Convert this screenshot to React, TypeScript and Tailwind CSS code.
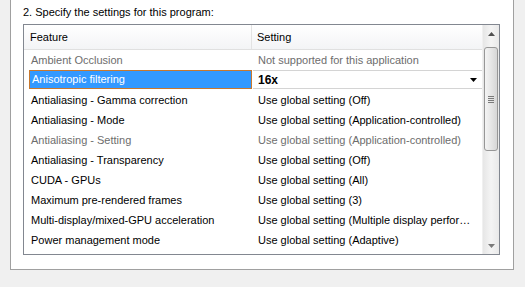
import React from "react"

type Row = { feature: string; setting: string; disabled?: boolean; selected?: boolean }

const rows: Row[] = [
  { feature: "Ambient Occlusion", setting: "Not supported for this application", disabled: true },
  { feature: "Anisotropic filtering", setting: "16x", selected: true },
  { feature: "Antialiasing - Gamma correction", setting: "Use global setting (Off)" },
  { feature: "Antialiasing - Mode", setting: "Use global setting (Application-controlled)" },
  { feature: "Antialiasing - Setting", setting: "Use global setting (Application-controlled)", disabled: true },
  { feature: "Antialiasing - Transparency", setting: "Use global setting (Off)" },
  { feature: "CUDA - GPUs", setting: "Use global setting (All)" },
  { feature: "Maximum pre-rendered frames", setting: "Use global setting (3)" },
  { feature: "Multi-display/mixed-GPU acceleration", setting: "Use global setting (Multiple display perfor…" },
  { feature: "Power management mode", setting: "Use global setting (Adaptive)" },
]

const Arrow = ({ down, color }: { down?: boolean; color: string }) => (
  <svg width="7" height="4" viewBox="0 0 7 4">
    {down ? <path d="M0 0h7L3.5 4z" fill={color} /> : <path d="M0 4h7L3.5 0z" fill={color} />}
  </svg>
)

function Scrollbar() {
  return (
    <div className="w-[17px] flex flex-col bg-gradient-to-r from-[#e6e6e6] via-[#f4f4f4] to-[#e9e9e9] border-l border-[#f0f0f0]">
      <div className="h-[17px] flex items-center justify-center">
        <Arrow color="#505050" />
      </div>
      <div className="mt-[5px] mx-[1px] h-[104px] rounded-[3px] border border-[#979797] bg-gradient-to-r from-[#f4f4f4] via-[#e6e6e6] to-[#d6d6d6] flex flex-col items-center justify-center gap-[1px]">
        <div className="w-[6px] h-[1px] bg-[#7a7a7a]" />
        <div className="w-[6px] h-[1px] bg-[#7a7a7a]" />
        <div className="w-[6px] h-[1px] bg-[#7a7a7a]" />
        <div className="w-[6px] h-[1px] bg-[#7a7a7a]" />
      </div>
      <div className="flex-1" />
      <div className="h-[17px] flex items-center justify-center">
        <Arrow down color="#7a7a7a" />
      </div>
    </div>
  )
}

function ListRow({ row }: { row: Row }) {
  const color = row.disabled ? "text-[#6d6d6d]" : "text-black"
  if (row.selected) {
    return (
      <div className="h-[20px] flex">
        <div className="w-[5px]" />
        <div className="w-[223px] h-[19px] bg-[#3399ff] border border-[#c8782e] text-white flex items-center pl-[2px] whitespace-nowrap">
          {row.feature}
        </div>
        <div className="w-[1px]" />
        <div className="flex-1 h-[19px] bg-white border-y border-[#d4d4d4] flex items-center pl-[5px] pr-[5px] font-bold text-[12px] text-black">
          <span className="flex-1">{row.setting}</span>
          <Arrow down color="#000" />
        </div>
      </div>
    )
  }
  return (
    <div className={`h-[20px] flex items-center ${color}`}>
      <div className="w-[229px] pl-[7px] whitespace-nowrap overflow-hidden">{row.feature}</div>
      <div className="flex-1 pl-[5px] whitespace-nowrap overflow-hidden">{row.setting}</div>
    </div>
  )
}

export default function App() {
  return (
    <div
      className="w-[525px] h-[287px] bg-[#f0f0f0] overflow-hidden text-[11px]"
      style={{ fontFamily: '"Liberation Sans", Arial, sans-serif' }}
    >
      <div className="ml-[10px] w-[504px] h-[270px] bg-white border-x border-b border-[#a0a0a0] pl-[12px] flex flex-col">
        <div className="h-[24px] flex items-center text-black">2. Specify the settings for this program:</div>
        <div className="w-[477px] h-[231px] border border-[#828790] flex bg-white">
          <div className="flex-1 flex flex-col">
            <div className="h-[25px] flex border-b border-[#e0e0e0] bg-gradient-to-b from-white to-[#f3f4f6] text-black">
              <div className="w-[228px] pl-[6px] flex items-center border-r border-[#e3e3e3]">Feature</div>
              <div className="flex-1 pl-[5px] flex items-center">Setting</div>
            </div>
            {rows.map((r) => (
              <ListRow key={r.feature} row={r} />
            ))}
          </div>
          <Scrollbar />
        </div>
      </div>
    </div>
  )
}
